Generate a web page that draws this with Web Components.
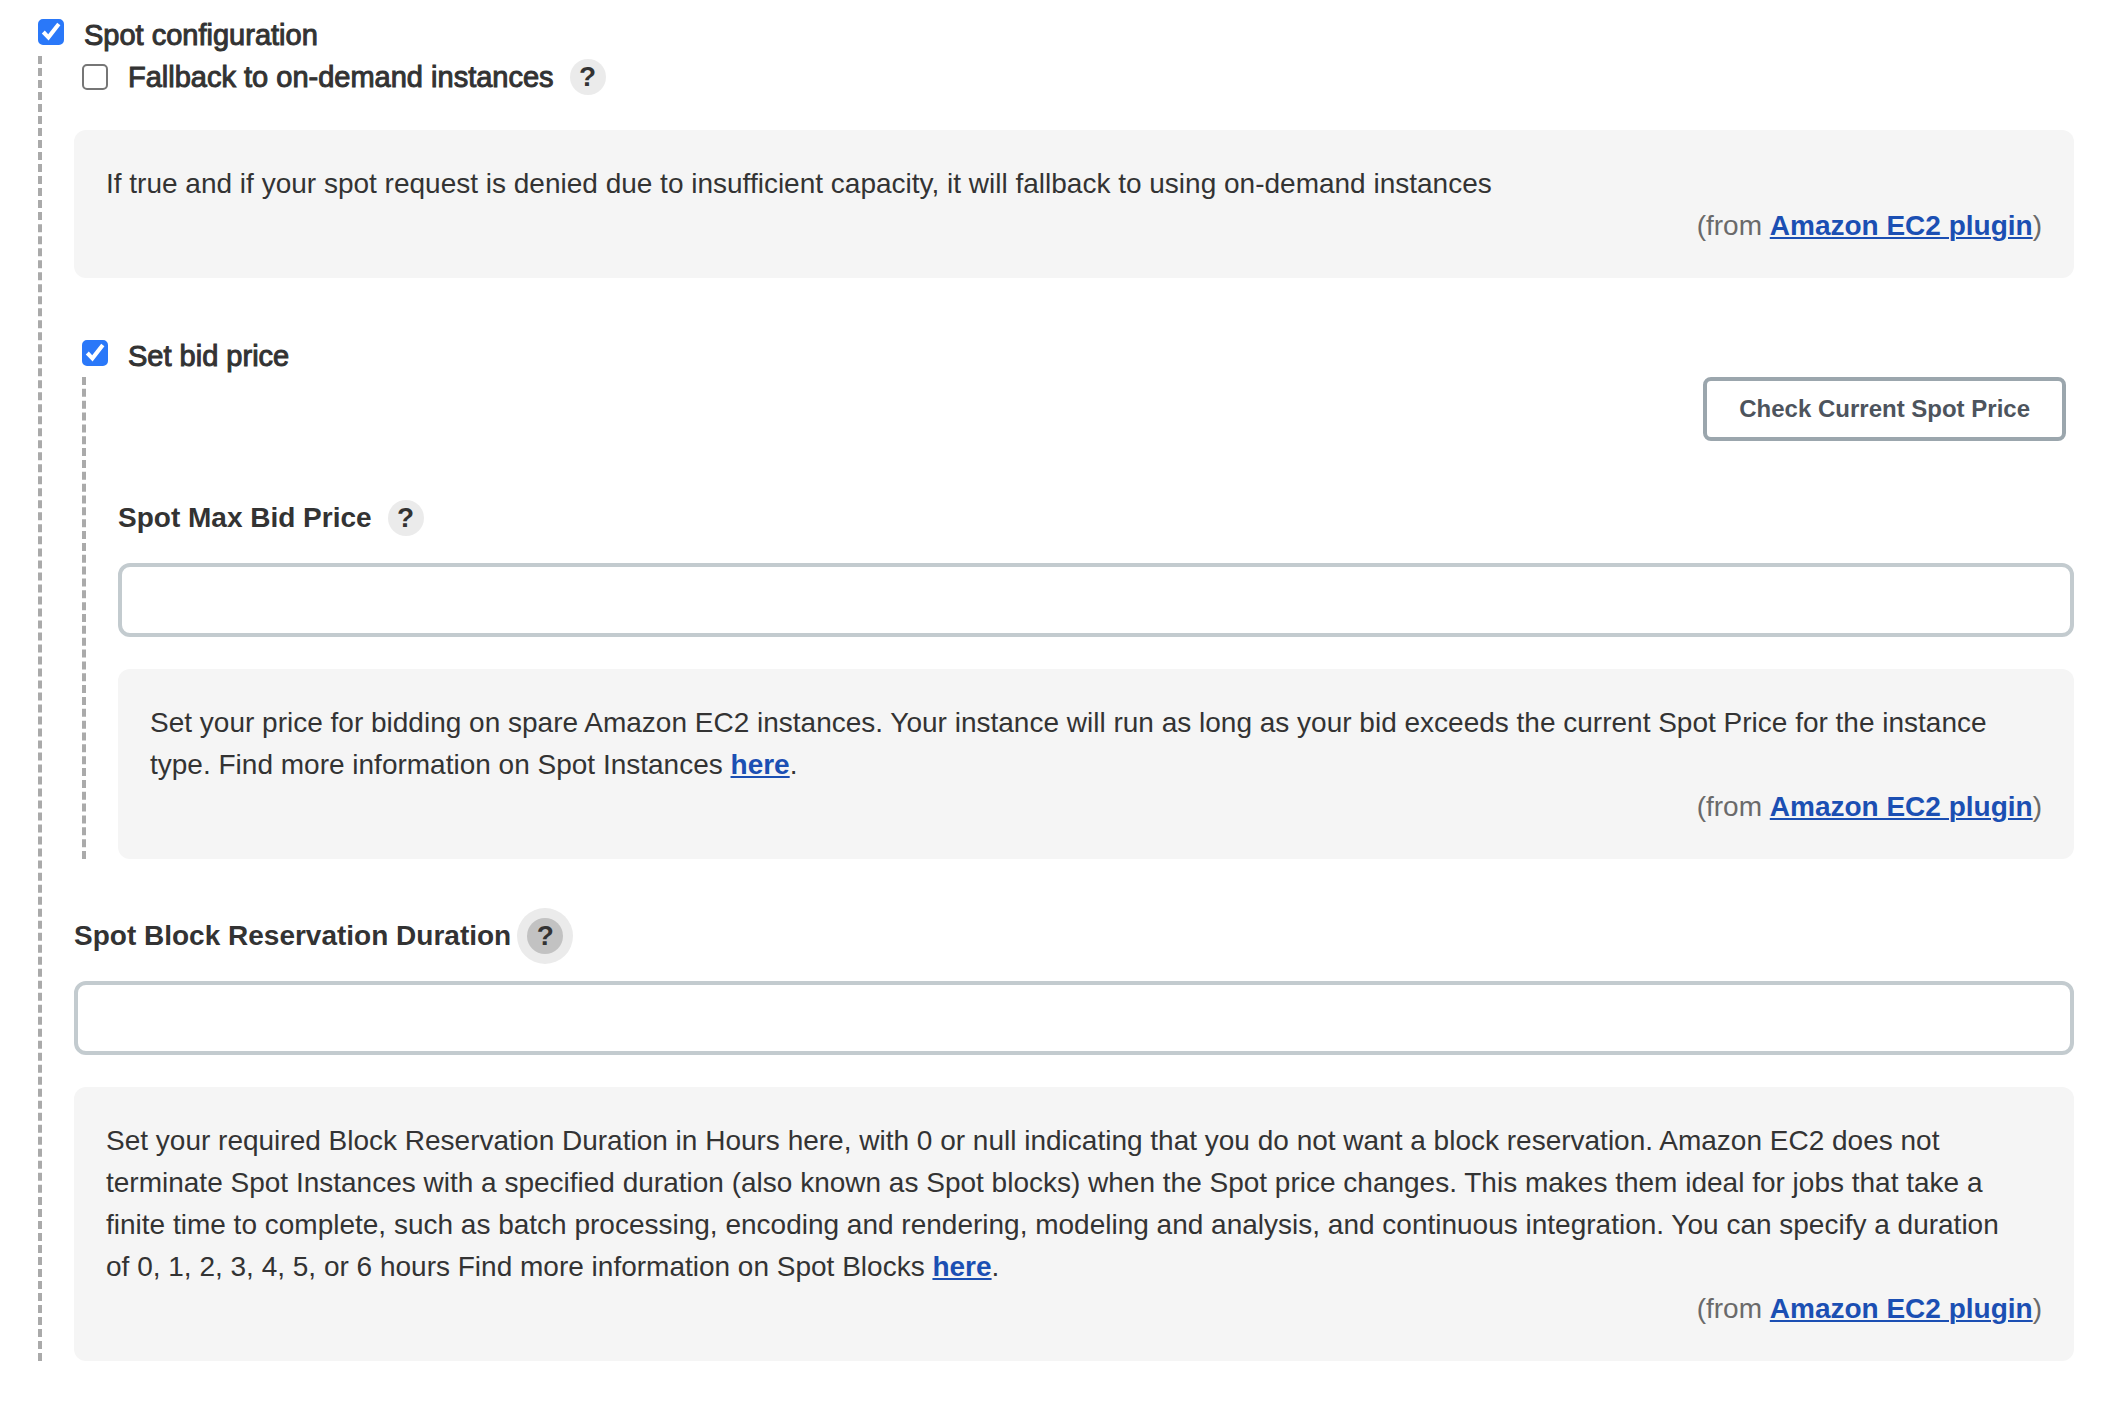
<!DOCTYPE html>
<html lang="en">
<head>
<meta charset="utf-8">
<title>Spot configuration</title>
<style>
  body {
    margin: 0;
    padding: 13px 44px 48px 38px;
    background: #fff;
    color: #333;
    font: 28px/42px "Liberation Sans", Arial, sans-serif;
  }
  a { color: #1b4fb3; font-weight: 700; text-decoration: underline; text-decoration-thickness: 2px; text-underline-offset: 2px; }
</style>
</head>
<body>
<spot-toggle label="Spot configuration" checked>
  <spot-option label="Fallback to on-demand instances">
    <help-box>If true and if your spot request is denied due to insufficient capacity, it will fallback to using on-demand instances</help-box>
  </spot-option>
  <spot-toggle label="Set bid price" checked class="nested">
    <action-button>Check Current Spot Price</action-button>
    <text-field label="Spot Max Bid Price">
      <help-box>Set your price for bidding on spare Amazon EC2 instances. Your instance will run as long as your bid exceeds the current Spot Price for the instance type. Find more information on Spot Instances <a href="#spot-instances">here</a>.</help-box>
    </text-field>
  </spot-toggle>
  <text-field label="Spot Block Reservation Duration" help-active>
    <help-box>Set your required Block Reservation Duration in Hours here, with 0 or null indicating that you do not want a block reservation. Amazon EC2 does not terminate Spot Instances with a specified duration (also known as Spot blocks) when the Spot price changes. This makes them ideal for jobs that take a finite time to complete, such as batch processing, encoding and rendering, modeling and analysis, and continuous integration. You can specify a duration of&nbsp;0, 1, 2, 3, 4, 5, or 6 hours Find more information on Spot Blocks <a href="#spot-blocks">here</a>.</help-box>
  </text-field>
</spot-toggle>

<script>
  const define = (name, markup, setup) => {
    const template = document.createElement('template');
    template.innerHTML = '<style>*{box-sizing:border-box}</style>' + markup;
    customElements.define(name, class extends HTMLElement {
      connectedCallback() {
        if (this.shadowRoot) return;
        const root = this.attachShadow({ mode: 'open' });
        root.append(template.content.cloneNode(true));
        if (setup) setup(this, root);
      }
    });
  };

  // Check box with its label
  define('check-box', `
    <style>
      :host { display: block; }
      label { display: flex; align-items: var(--check-align, center); gap: 20px; cursor: pointer; }
      .box { display: grid; margin-top: var(--check-top, 0); }
      input, svg { grid-area: 1 / 1; width: 26px; height: 26px; margin: 0; }
      input { appearance: none; border: 2px solid #767676; border-radius: 5px; background: #fff; cursor: pointer; }
      input:checked { border-color: #2a78f9; background: #2a78f9; }
      svg { display: none; pointer-events: none; z-index: 1; }
      input:checked + svg { display: block; }
      .text { font-size: 29px; -webkit-text-stroke: 1px currentColor; }
    </style>
    <label>
      <span class="box"><input type="checkbox"><svg viewBox="0 0 26 26" aria-hidden="true"><path d="M3.8 14.6 6.8 11.6 10.2 15.2 19.2 3.8 22.4 6.2 10.6 21.4Z" fill="#fff"/></svg></span>
      <span class="text"></span>
    </label>`,
    (host, root) => {
      root.querySelector('input').checked = host.hasAttribute('checked');
      root.querySelector('.text').textContent = host.getAttribute('label');
    });

  // Round question-mark button
  define('help-button', `
    <style>
      :host { display: block; }
      button { display: block; width: 36px; height: 36px; padding: 0; border: 0; border-radius: 50%; background: #ebebeb; color: #333; font: inherit; font-weight: 700; line-height: 36px; text-align: center; cursor: pointer; }
      :host([active]) button { background: #c2c2c2; box-shadow: 0 0 0 10px #ebebeb; }
    </style>
    <button type="button">?</button>`,
    (host, root) => root.querySelector('button').setAttribute('aria-label', 'Help for ' + host.getAttribute('topic')));

  // Grey help panel with the plugin credit
  define('help-box', `
    <style>
      :host { display: block; padding: 33px 32px 31px; border-radius: 12px; background: #f5f5f5; box-sizing: border-box; }
      .from { text-align: right; color: #6a6a6a; }
      a { color: #1b4fb3; font-weight: 700; text-decoration: underline; text-decoration-thickness: 2px; text-underline-offset: 2px; }
    </style>
    <div><slot></slot></div>
    <div class="from">(from <a href="#ec2-plugin">Amazon EC2 plugin</a>)</div>`);

  // Check box that opens an indented group marked by a dashed rule
  define('spot-toggle', `
    <style>
      :host { display: block; }
      :host(.nested) { margin-left: 8px; }
      check-box { padding-top: 2px; line-height: 41px; --check-align: flex-start; --check-top: 4px; }
      .group { display: flex; flex-direction: column; gap: 56px; padding-left: 32px; border-left: 4px dashed #aaa; }
    </style>
    <div class="head"></div>
    <div class="group"><slot></slot></div>`,
    (host, root) => {
      const box = document.createElement('check-box');
      box.setAttribute('label', host.getAttribute('label'));
      box.toggleAttribute('checked', host.hasAttribute('checked'));
      root.querySelector('.head').append(box);
    });

  // Single check box option with a help button
  define('spot-option', `
    <style>
      :host { display: flex; flex-direction: column; gap: 32px; }
      .row { display: flex; align-items: center; gap: 16px; padding-left: 8px; }
    </style>
    <div class="row"></div>
    <slot></slot>`,
    (host, root) => {
      const label = host.getAttribute('label');
      const box = document.createElement('check-box');
      box.setAttribute('label', label);
      const help = document.createElement('help-button');
      help.setAttribute('topic', label);
      root.querySelector('.row').append(box, help);
    });

  define('action-button', `
    <style>
      :host { display: flex; justify-content: flex-end; padding-right: 8px; }
      button { height: 64px; padding: 0 32px; border: 4px solid #9ba6ad; border-radius: 8px; background: #fff; color: #4d545d; font: inherit; font-size: 24px; font-weight: 700; line-height: 32px; cursor: pointer; }
    </style>
    <button type="button"><slot></slot></button>`);

  // Labelled text input followed by its help panel
  define('text-field', `
    <style>
      :host { display: flex; flex-direction: column; gap: 32px; }
      .field { display: flex; flex-direction: column; gap: 24px; }
      .row { display: flex; align-items: center; gap: 16px; }
      label { font-weight: 700; }
      input { width: 100%; height: 74px; padding: 0 20px; border: 4px solid #c3cbcf; border-radius: 12px; background: #fff; color: inherit; font: inherit; }
    </style>
    <div class="field">
      <div class="row"><label for="value"></label></div>
      <input id="value" type="text">
    </div>
    <slot></slot>`,
    (host, root) => {
      const label = host.getAttribute('label');
      root.querySelector('label').textContent = label;
      const help = document.createElement('help-button');
      help.setAttribute('topic', label);
      help.toggleAttribute('active', host.hasAttribute('help-active'));
      root.querySelector('.row').append(help);
    });
</script>
</body>
</html>
